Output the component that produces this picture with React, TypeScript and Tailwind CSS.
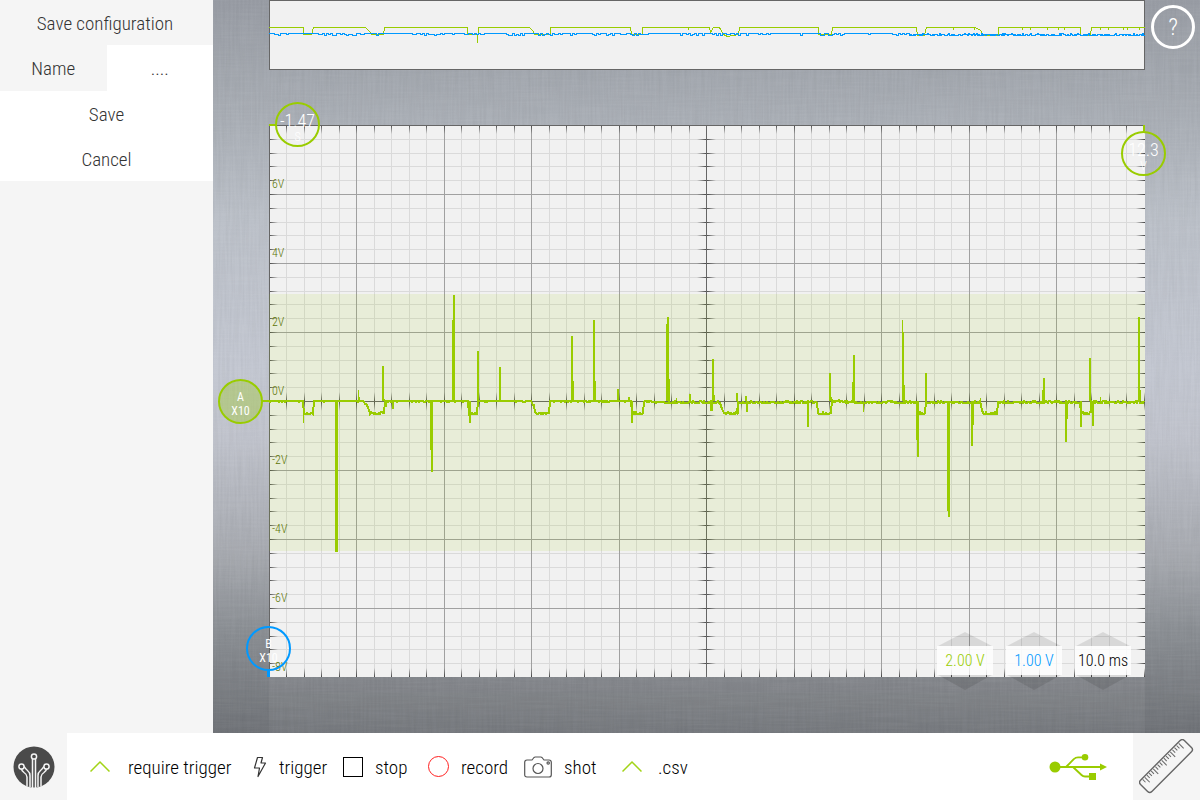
import { useState } from 'react'

const WIDTH = 876
const HEIGHT = 552
const GREEN = '#99cc00'
const BLUE = '#0099ff'

// cheap repeatable noise so the traces look the same on every render
function noise(n: number) {
  const s = Math.sin(n * 12.9898) * 43758.5453
  return s - Math.floor(s)
}

// level of channel A over time, [x, y] corner points
const levelA: number[][] = [
  [0, 276], [34, 276], [35, 288], [44, 288], [45, 276], [94, 276], [98, 280], [101, 288], [115, 288], [116, 276],
  [199, 276], [200, 288], [208, 288], [209, 276], [262, 276], [265, 280], [266, 288], [280, 288], [281, 276],
  [362, 276], [363, 288], [374, 288], [375, 276], [390, 277], [451, 277], [455, 288], [468, 288], [469, 277],
  [548, 277], [549, 288], [562, 288], [563, 276], [590, 277], [648, 277], [649, 288], [656, 288], [657, 277],
  [711, 277], [714, 288], [728, 288], [729, 277], [811, 277], [812, 288], [822, 288], [823, 277], [875, 277],
]

// [x, tip, width]
const spikes: number[][] = [
  [34, 298, 1], [66, 427, 3], [89, 265, 1], [90, 272, 1], [113, 241, 2], [117, 282, 1], [123, 284, 2], [162, 347, 2], [161, 325, 2],
  [184, 170, 2], [183, 195, 3], [200, 298, 2], [208, 226, 2], [230, 242, 2], [302, 211, 2], [303, 256, 2], [324, 195, 2], [325, 256, 2],
  [348, 264, 2], [359, 272, 2], [362, 298, 2], [398, 192, 2], [397, 199, 2], [398, 254, 3], [407, 273, 1], [420, 269, 2], [441, 286, 3],
  [443, 234, 2], [444, 270, 2], [467, 268, 2], [468, 289, 2], [476, 271, 2], [477, 287, 2], [538, 302, 2], [560, 248, 2],
  [584, 230, 2], [583, 257, 2], [594, 287, 1], [633, 195, 1], [633, 207, 2], [633, 260, 3], [648, 332, 2], [647, 315, 2], [656, 248, 2],
  [678, 386, 2], [679, 392, 2], [702, 321, 2], [703, 300, 2], [774, 253, 2], [773, 265, 2], [796, 317, 2], [797, 294, 2],
  [811, 302, 2], [820, 233, 2], [821, 284, 2], [823, 301, 2], [831, 272, 1], [869, 192, 2], [870, 265, 2],
]

const overviewA =
  '-1,27 34,27 34,34 42,34 44,27 96,27 100,31 102,34 114,34 115,27 198,27 198,34 208,34 208,42 209,27 260,27 264,31 265,34 281,34 281,27 361,27 362,34 373,34 373,27 440,27 441,32 444,27 450,27 454,34 458,36 469,34 470,27 549,27 549,34 562,34 563,27 647,27 648,35 655,35 657,27 706,27 711,30 714,35 729,35 729,27 811,27 811,35 821,35 822,27 875,27'

const overviewNotches = [419, 684, 705, 753, 761, 778, 789, 795, 831, 839, 854, 858, 870]

function levelAt(x: number) {
  for (let i = 1; i < levelA.length; i++) {
    const [x0, y0] = levelA[i - 1]
    const [x1, y1] = levelA[i]
    if (x <= x1) return y0 + ((y1 - y0) * (x - x0)) / (x1 - x0)
  }
  return 277
}

function traceA() {
  const points: string[] = []
  for (let x = 0; x <= 875; x++) {
    const level = Math.round(levelAt(x))
    const n = noise(x)
    let jitter = n > 0.85 ? 1 : 0
    if (level > 280 || x > 390) jitter = n > 0.5 ? 1 : n < 0.15 ? -1 : 0
    points.push(`${x},${level + jitter}`)
  }
  return points.join(' ')
}

function traceB() {
  const points: string[] = []
  for (let x = 0; x <= 876; x++) {
    const busy = x > 640
    const density = busy ? 0.9 : noise(Math.floor(x / 24) + 3) > 0.4 ? 0.45 : 0.04
    const n = noise(busy ? x : Math.floor(x / 2) + 500)
    points.push(`${x},${n < density ? (n < density / 2 ? 35 : 34) : 33}`)
  }
  return points.join(' ')
}

function range(n: number) {
  return Array.from({ length: n }, (_, i) => i)
}

// brushed metal grain
function Grain() {
  return (
    <svg className="pointer-events-none absolute inset-0 size-full" aria-hidden="true">
      <filter id="grainX" x="0" y="0" width="100%" height="100%">
        <feTurbulence type="fractalNoise" baseFrequency=".02 .5" numOctaves="2" seed="4" />
        <feColorMatrix values="0 0 0 0 1  0 0 0 0 1  0 0 0 0 1  .9 0 0 0 -.3" />
      </filter>
      <filter id="grainY" x="0" y="0" width="100%" height="100%">
        <feTurbulence type="fractalNoise" baseFrequency=".5 .02" numOctaves="2" seed="9" />
        <feColorMatrix values="0 0 0 0 0  0 0 0 0 0  0 0 0 0 0  .9 0 0 0 -.3" />
      </filter>
      <rect width="100%" height="100%" filter="url(#grainX)" opacity=".09" />
      <rect width="100%" height="100%" filter="url(#grainY)" opacity=".07" />
    </svg>
  )
}

function Overview() {
  return (
    <div className="relative h-[70px] border border-[#666666] bg-[#f1f1f1]">
      <svg viewBox={`0 0 ${WIDTH} 70`} preserveAspectRatio="none" className="-m-px block h-[70px] w-[calc(100%+2px)] max-w-none overflow-visible" shapeRendering="crispEdges">
        <polyline points={overviewA} fill="none" stroke={GREEN} strokeWidth="1" transform="translate(0.5 .5)" />
        {overviewNotches.map((x) => (
          <rect key={x} x={x} y="28" width="1" height="2" fill={GREEN} />
        ))}
        <polyline points={traceB()} fill="none" stroke={BLUE} strokeWidth="1" transform="translate(0 .5)" />
      </svg>
    </div>
  )
}

function Plot() {
  const cols = range(51).map((i) => Math.floor(i * 17.5))
  const rows = range(41).map((i) => Math.round(i * 13.8))
  const labels = ['6V', '4V', '2V', '0V', '-2V', '-4V', '-6V', '-8V']

  return (
    <svg viewBox={`0 0 ${WIDTH} ${HEIGHT}`} preserveAspectRatio="none" className="block h-[552px] w-full bg-[#f1f1f1]" shapeRendering="crispEdges">
      <defs>
        <linearGradient id="fadeRight">
          <stop offset="0" stopColor="#444" />
          <stop offset="1" stopColor="#444" stopOpacity="0" />
        </linearGradient>
        <linearGradient id="fadeLeft">
          <stop offset="0" stopColor="#444" stopOpacity="0" />
          <stop offset="1" stopColor="#444" />
        </linearGradient>
        <linearGradient id="fadeDown" x2="0" y2="1">
          <stop offset="0" stopColor="#444" />
          <stop offset="1" stopColor="#444" stopOpacity="0" />
        </linearGradient>
        <linearGradient id="fadeUp" x2="0" y2="1">
          <stop offset="0" stopColor="#444" stopOpacity="0" />
          <stop offset="1" stopColor="#444" />
        </linearGradient>
        <linearGradient id="fadeX">
          <stop offset="0" stopColor="#444" stopOpacity="0" />
          <stop offset=".5" stopColor="#444" />
          <stop offset="1" stopColor="#444" stopOpacity="0" />
        </linearGradient>
        <linearGradient id="fadeY" x2="0" y2="1">
          <stop offset="0" stopColor="#444" stopOpacity="0" />
          <stop offset=".5" stopColor="#444" />
          <stop offset="1" stopColor="#444" stopOpacity="0" />
        </linearGradient>
      </defs>

      {cols.map((x, i) => i % 5 !== 0 && <rect key={x} x={x} y="0" width="1" height={HEIGHT} fill="#dadada" />)}
      {rows.map((y, i) => i % 5 !== 0 && <rect key={y} x="0" y={y} width={WIDTH} height="1" fill="#dadada" />)}
      {cols.map((x, i) => i % 5 === 0 && i < 50 && <rect key={x} x={x} y="0" width="1" height={HEIGHT} fill="#a0a0a0" />)}
      {rows.map((y, i) => i % 5 === 0 && i < 40 && <rect key={y} x="0" y={y} width={WIDTH} height="1" fill="#a0a0a0" />)}

      {rows.map((y) => (
        <g key={y}>
          <rect x="0" y={y} width="9" height="1" fill="url(#fadeRight)" />
          <rect x="867" y={y} width="9" height="1" fill="url(#fadeLeft)" />
          <rect x="428" y={y} width="19" height="1" fill="url(#fadeX)" />
        </g>
      ))}
      {cols.map((x) => (
        <g key={x}>
          <rect x={x} y="0" width="1" height="9" fill="url(#fadeDown)" />
          <rect x={x} y="543" width="1" height="9" fill="url(#fadeUp)" />
          <rect x={x} y="267" width="1" height="19" fill="url(#fadeY)" />
        </g>
      ))}
      <rect x="437" y="0" width="1" height={HEIGHT} fill="#666" />
      <rect x="0" y="276" width={WIDTH} height="1" fill="#666" />
      <rect x="0" y="0" width="1" height={HEIGHT} fill="#666" />
      <rect x="0" y="0" width={WIDTH} height="1" fill="#666" />

      <rect x="0" y="169" width={WIDTH} height="257" fill={GREEN} fillOpacity=".1" />
      {labels.map((label, i) => (
        <text key={label} x="3" y={63 + i * 69} fontSize="12" fill="#5c7506">
          {label}
        </text>
      ))}

      <polyline points={traceA()} fill="none" stroke={GREEN} strokeWidth="2" />
      {spikes.map(([x, tip, w], i) => (
        <rect key={i} x={x} y={Math.min(tip, 276)} width={w} height={Math.abs(tip - 276)} fill={GREEN} />
      ))}
    </svg>
  )
}

function Scale({ value, color }: { value: string; color: string }) {
  return (
    <div className="flex w-14 flex-col items-center">
      <button type="button" aria-label="Increase" className="block">
        <svg width="54" height="14" className="block">
          <path d="M0 14 27 0l27 14z" fill="#000" fillOpacity=".1" />
        </svg>
      </button>
      <output className={`h-[29px] w-full bg-white/80 text-center text-base leading-[29px] whitespace-nowrap ${color}`}>{value}</output>
      <button type="button" aria-label="Decrease" className="block">
        <svg width="54" height="15" className="block">
          <path d="M0 0h54L27 15z" fill="#000" fillOpacity=".1" />
        </svg>
      </button>
    </div>
  )
}

function Chevron() {
  return (
    <svg width="20" height="20" fill="none" stroke="#a2d417" strokeWidth="1.5">
      <path d="M.5 14.5 10 5l9.500 9.500" />
    </svg>
  )
}

function Bolt() {
  return (
    <svg width="14" height="22" fill="none" stroke="#333" strokeWidth="1.2" strokeLinejoin="round">
      <path d="M4.500 1.500H9.500L8 7h4.500L5 20.500 6.500 12H1.500z" />
    </svg>
  )
}

function Camera() {
  return (
    <svg width="28" height="22" fill="none" stroke="#555" strokeWidth="1.2" strokeLinejoin="round">
      <path d="M3 4h5l2-2.500Q10.500 1 11.200 1h5.600q.7 0 1.200.5L20 4h5Q27.300 4 27.300 6.300V18.700Q27.300 21 25 21H3Q.7 21 .7 18.700V6.300Q.7 4 3 4z" />
      <circle cx="14" cy="12.500" r="5" />
      <circle cx="24.200" cy="7" r="1.200" />
    </svg>
  )
}

function Logo() {
  return (
    <svg width="42" height="42" viewBox="0 0 42 42">
      <circle cx="21" cy="21" r="20.500" fill="#4a4a4a" />
      <g fill="none" stroke="#f5f5f5" strokeWidth="1.500">
        <circle cx="21" cy="10.500" r="2.600" />
        <circle cx="8.500" cy="20.500" r="2.600" />
        <circle cx="33.500" cy="20.500" r="2.600" />
        <path d="M19.500 13v29M22.500 13v29" />
        <path d="M8.500 23q0 1.500 2.500 3.500 3 2 3 4.500v9.500M11.200 20.500q1.300 2.500 3.300 4 2.500 2 2.500 5V41" />
        <path d="M33.500 23q0 1.500-2.500 3.500-3 2-3 4.500v9.500M30.800 20.500q-1.300 2.500-3.300 4-2.500 2-2.500 5V41" />
      </g>
    </svg>
  )
}

function Usb() {
  return (
    <svg width="58" height="28" fill={GREEN} role="img" aria-label="USB connected">
      <circle cx="6" cy="14" r="5.500" />
      <path d="M51 10.500 58 14l-7 3.500z" />
      <circle cx="36" cy="4.300" r="3.300" />
      <path d="M40 20h7v7h-7z" />
      <path d="M6 14h46M17 14l8-8q1.500-1.700 4-1.700h6M24 14l8.500 8q1.500 1.500 3.500 1.500h5" fill="none" stroke={GREEN} strokeWidth="1.800" />
    </svg>
  )
}

function Ruler() {
  return (
    <svg width="56" height="56" fill="none" stroke="#666" strokeWidth="1.400">
      <g transform="translate(27 27) rotate(-45)">
        <rect x="-31" y="-8" width="62" height="16" rx="3" />
        {range(18).map((i) => (
          <path key={i} d={`M${-26 + i * 3} -7v${i % 4 === 1 ? 7 : 4}`} strokeWidth="1" />
        ))}
      </g>
    </svg>
  )
}

export default function App() {
  const [name, setName] = useState('....')

  return (
    <div className="flex min-h-screen flex-col bg-[#f5f5f5] font-['Roboto_Condensed',Roboto,sans-serif] font-light text-black">
      <div className="flex flex-1">
        <form className="w-[213px] shrink-0 text-[19px] text-[#333333]" onSubmit={(e) => e.preventDefault()}>
          <h1 className="flex h-[45px] items-center justify-center pt-[3px] pr-[3px]">Save configuration</h1>
          <div className="grid h-[46px] grid-cols-2">
            <label htmlFor="name" className="flex items-center justify-center pt-[3px]">Name</label>
            <input
              id="name"
              value={name}
              onChange={(e) => setName(e.target.value)}
              className="min-w-0 bg-white pt-[3px] text-center outline-none"
            />
          </div>
          <button type="submit" className="block h-[45px] w-full bg-white pt-[3px]">Save</button>
          <button type="button" className="block h-[45px] w-full bg-white pt-[3px]">Cancel</button>
        </form>

        <main className="relative min-w-0 flex-1 bg-[linear-gradient(#989ca4_0%,#a7acb3_14%,#bbc0c8_30%,#c3c7d1_50%,#c0c3cc_60%,#a6a9af_76%,#8b8f94_86%,#6f7277_100%)] pr-[55px] pl-14">
          <Grain />
          <Overview />

          <div className="relative mt-[55px]">
            <Plot />

            <div className="absolute top-[275px] -left-2 h-[2px] w-2 bg-[#99cc00]" />
            <button type="button" className="absolute top-[254px] -left-[51px] flex size-[45px] flex-col items-center justify-center rounded-full border-2 border-[#99cc00] bg-[#99cc00]/30 pt-1 text-xs leading-[14px] font-normal text-white">
              <span>A</span>
              <span>X10</span>
            </button>

            <div className="absolute -top-px left-0 h-[2px] w-[6px] bg-[#99cc00]" />
            <button type="button" className="absolute -top-[23px] left-[6px] flex size-[45px] flex-col items-center justify-center rounded-full border-2 border-[#99cc00] pt-[6px] text-lg leading-[18px] text-white">
              <span>-1.47</span>
              <span className="text-xs leading-[14px]">S</span>
            </button>

            <div className="absolute top-0 right-0 h-[6px] w-[2px] bg-[#99cc00]" />
            <button type="button" className="absolute top-[6px] -right-[21px] flex size-[45px] flex-col items-center justify-center rounded-full border-2 border-[#99cc00] pt-[6px] text-lg leading-[18px] text-white">
              <span>12.3</span>
              <span className="text-xs leading-[14px]">V</span>
            </button>

            <div className="absolute bottom-0 -left-[2px] h-[6px] w-[3px] bg-[#0099ff]" />
            <button type="button" className="absolute bottom-[6px] -left-[23px] flex size-[45px] flex-col items-center justify-center rounded-full border-2 border-[#0099ff] pt-1 text-xs leading-[14px] font-normal text-white">
              <span>B</span>
              <span>X10</span>
            </button>

            <div className="absolute right-[14px] -bottom-[13px] flex gap-[13px]">
              <Scale value="2.00 V" color="text-[#99cc00]" />
              <Scale value="1.00 V" color="text-[#0099ff]" />
              <Scale value="10.0 ms" color="text-black" />
            </div>
          </div>
          <div className="h-14 bg-white/5" />

          <button type="button" aria-label="Help" className="absolute top-[5px] right-[5px] size-11 rounded-full border-[3px] border-white text-2xl text-white">
            ?
          </button>
        </main>
      </div>

      <footer className="flex h-[67px] bg-white text-[19px]">
        <div className="flex w-[67px] shrink-0 items-center justify-center bg-[#f5f5f5]">
          <Logo />
        </div>
        <div className="flex flex-1 items-center pl-[23px]">
          <button type="button" className="flex w-[163px] items-center gap-[18px]">
            <Chevron />
            <span className="pt-[3px]">require trigger</span>
          </button>
          <button type="button" className="flex w-[90px] items-center gap-3">
            <Bolt />
            <span className="pt-[3px]">trigger</span>
          </button>
          <button type="button" className="flex w-[85px] items-center gap-3">
            <span className="size-5 border border-black" />
            <span className="pt-[3px]">stop</span>
          </button>
          <button type="button" className="flex w-24 items-center gap-3">
            <span className="size-[21px] rounded-full border border-[#ff2020]" />
            <span className="pt-[3px]">record</span>
          </button>
          <button type="button" className="flex w-[98px] items-center gap-3">
            <Camera />
            <span className="pt-[3px]">shot</span>
          </button>
          <button type="button" className="flex items-center gap-4">
            <Chevron />
            <span className="pt-[3px]">.csv</span>
          </button>
        </div>
        <div className="flex shrink-0 items-center pr-[26px]">
          <Usb />
        </div>
        <button type="button" aria-label="Measure" className="flex w-[67px] shrink-0 items-center justify-center bg-[#f5f5f5]">
          <Ruler />
        </button>
      </footer>
    </div>
  )
}
